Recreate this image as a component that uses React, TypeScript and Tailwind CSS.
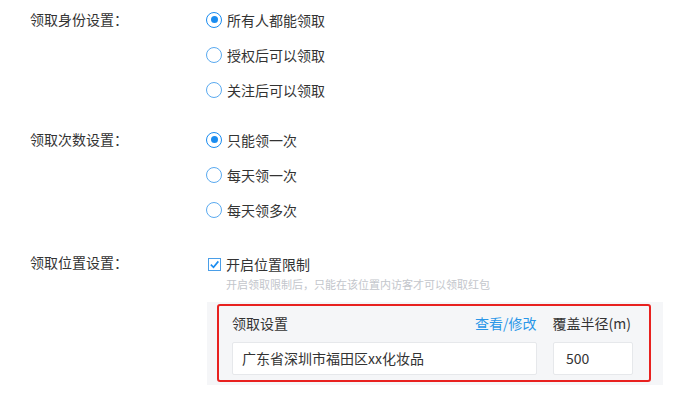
import React from 'react';

type Opt = { label: string; checked?: boolean };

function Radio({ label, checked }: Opt) {
    return (
        <div className="h-[35px] flex items-center">
            <span
                className={`w-[16px] h-[16px] rounded-full border flex items-center justify-center bg-white ${
                    checked ? 'border-[#1a8cf0]' : 'border-[#5aaaf0]'
                }`}
            >
                {checked && <span className="w-[7px] h-[7px] rounded-full bg-[#1a8cf0]" />}
            </span>
            <span className="ml-[5px] text-[14px] leading-[20px] text-[#333]">{label}</span>
        </div>
    );
}

function Group({ title, options }: { title: string; options: Opt[] }) {
    return (
        <div className="flex">
            <div className="w-[206px] pl-[30px] h-[35px] flex items-center text-[14px] text-[#333]">{title}</div>
            <div className="flex flex-col">
                {options.map((o) => (
                    <Radio key={o.label} {...o} />
                ))}
            </div>
        </div>
    );
}

export default function App() {
    return (
        <div className="w-[674px] h-[400px] bg-white overflow-hidden font-['Microsoft_YaHei','Noto_Sans_CJK_SC',sans-serif] text-[#333] pt-[2px]">
            <Group
                title="领取身份设置："
                options={[{ label: '所有人都能领取', checked: true }, { label: '授权后可以领取' }, { label: '关注后可以领取' }]}
            />
            <div className="mt-[15px]">
                <Group
                    title="领取次数设置："
                    options={[{ label: '只能领一次', checked: true }, { label: '每天领一次' }, { label: '每天领多次' }]}
                />
            </div>

            <div className="flex mt-[28px]">
                <div className="w-[206px] pl-[30px] h-[35px] flex items-center text-[14px] -mt-[10px]">领取位置设置：</div>
                <div className="flex flex-col">
                    <div className="h-[18px] flex items-center pl-[2px]">
                        <span className="w-[13px] h-[13px] border border-[#4a9ee8] bg-white flex items-center justify-center">
                            <svg viewBox="0 0 12 12" className="w-[11px] h-[11px]">
                                <path d="M2 6.2 L4.9 9 L10.2 2.6" fill="none" stroke="#1a8cf0" strokeWidth="1.8" />
                            </svg>
                        </span>
                        <span className="ml-[5px] text-[14px] leading-[18px]">开启位置限制</span>
                    </div>
                    <div className="pl-[20px] mt-[2px] text-[11px] leading-[18px] text-[#c3c6cc]">
                        开启领取限制后，只能在该位置内访客才可以领取红包
                    </div>
                    <div className="mt-[9px] w-[456px] ml-[1px] bg-[#f5f6f8] pl-[10px] pt-[2px] pb-[3px]">
                        <div className="w-[434px] border-2 border-[#e8211f] rounded-[3px] pl-[13px] pt-[6px] pb-[5px]">
                            <div className="flex h-[22px] items-center text-[14px]">
                                <span className="w-[243px]">领取设置</span>
                                <span className="text-[#2a96e8]">查看/修改</span>
                                <span className="ml-[16px]">覆盖半径(m)</span>
                            </div>
                            <div className="flex mt-[8px] gap-[16px]">
                                <div className="w-[305px] h-[33px] bg-white border border-[#e6e8eb] rounded-[2px] flex items-center pl-[9px] text-[14px]">
                                    广东省深圳市福田区xx化妆品
                                </div>
                                <div className="w-[80px] h-[33px] bg-white border border-[#e6e8eb] rounded-[2px] flex items-center pl-[12px] text-[14px]">
                                    500
                                </div>
                            </div>
                        </div>
                    </div>
                </div>
            </div>
        </div>
    );
}
